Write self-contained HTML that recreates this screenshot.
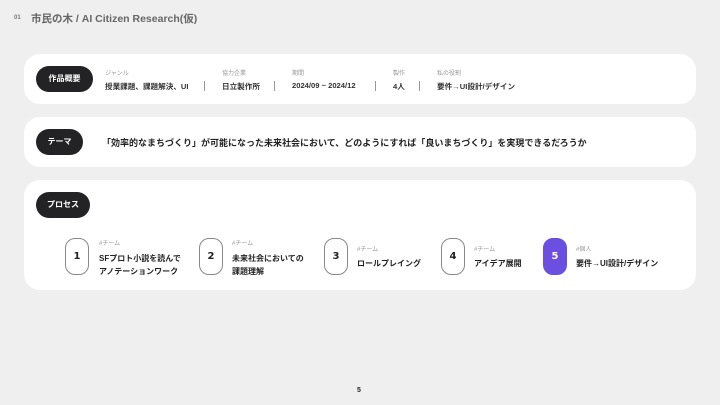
<!DOCTYPE html>
<html><head><meta charset="utf-8"><style>
*{margin:0;padding:0;box-sizing:border-box}
body{width:720px;height:405px;background:#efefef;font-family:"Liberation Sans","Noto Sans CJK JP",sans-serif;position:relative;overflow:hidden;color:#222}
.a{position:absolute;white-space:nowrap}
.card{position:absolute;left:24px;width:672px;background:#fff;border-radius:16px}
.pill{position:absolute;left:12px;height:26px;background:#232225;color:#fff;border-radius:13px;font-size:8px;font-weight:bold;line-height:26px;text-align:center}
.lab{font-size:6px;color:#999}
.val{font-size:7.6px;font-weight:bold;color:#333}
.sep{position:absolute;width:1px;height:10px;background:#999;top:27px}
.box{position:absolute;top:58px;width:24px;height:37px;border:1px solid #888;border-radius:10px;font-size:10px;font-weight:900;text-align:center;line-height:35px;font-family:"DejaVu Sans",sans-serif}
.tag{font-size:6px;color:#999;top:58px}
.st{font-size:8px;font-weight:bold;line-height:13px;top:72px}
</style></head><body>
<div class="a" style="left:14px;top:15px;font-size:6px;color:#777;font-weight:bold">01</div>
<div class="a" style="left:31px;top:11px;font-size:10.5px;color:#666;font-weight:bold">市民の木 / AI Citizen Research(仮)</div>

<div class="card" style="top:54px;height:50px">
<div class="pill" style="top:12px;width:57px">作品概要</div>
<div class="a lab" style="left:81px;top:14px">ジャンル</div>
<div class="a val" style="left:81px;top:27px">授業課題、課題解決、UI</div>
<div class="sep" style="left:180px"></div>
<div class="a lab" style="left:198px;top:14px">協力企業</div>
<div class="a val" style="left:198px;top:27px">日立製作所</div>
<div class="sep" style="left:250px"></div>
<div class="a lab" style="left:268px;top:14px">期間</div>
<div class="a val" style="left:268px;top:27px">2024/09 ~ 2024/12</div>
<div class="sep" style="left:351px"></div>
<div class="a lab" style="left:369px;top:14px">製作</div>
<div class="a val" style="left:369px;top:27px">4人</div>
<div class="sep" style="left:395px"></div>
<div class="a lab" style="left:413px;top:14px">私の役割</div>
<div class="a val" style="left:413px;top:27px">要件→UI設計/デザイン</div>
</div>

<div class="card" style="top:117px;height:50px">
<div class="pill" style="top:12px;width:47px">テーマ</div>
<div class="a" style="left:78px;top:19px;font-size:9px;font-weight:bold">「効率的なまちづくり」が可能になった未来社会において、どのようにすれば「良いまちづくり」を実現できるだろうか</div>
</div>

<div class="card" style="top:180px;height:110px">
<div class="pill" style="top:12px;width:54px">プロセス</div>
<div class="box" style="left:41px">1</div>
<div class="a tag" style="left:75px">#チーム</div>
<div class="a st" style="left:75px">SFプロト小説を読んで<br>アノテーションワーク</div>
<div class="box" style="left:175px">2</div>
<div class="a tag" style="left:208px">#チーム</div>
<div class="a st" style="left:208px">未来社会においての<br>課題理解</div>
<div class="box" style="left:300px">3</div>
<div class="a tag" style="left:333px;top:64px">#チーム</div>
<div class="a st" style="left:333px;top:77px">ロールプレイング</div>
<div class="box" style="left:417px">4</div>
<div class="a tag" style="left:450px;top:64px">#チーム</div>
<div class="a st" style="left:450px;top:77px">アイデア展開</div>
<div class="box" style="left:519px;background:#6b4fe0;border-color:#6b4fe0;color:#fff">5</div>
<div class="a tag" style="left:552px;top:64px">#個人</div>
<div class="a st" style="left:552px;top:77px">要件→UI設計/デザイン</div>
</div>

<div class="a" style="left:357px;top:387px;font-size:7px;font-weight:bold">5</div>
</body></html>
